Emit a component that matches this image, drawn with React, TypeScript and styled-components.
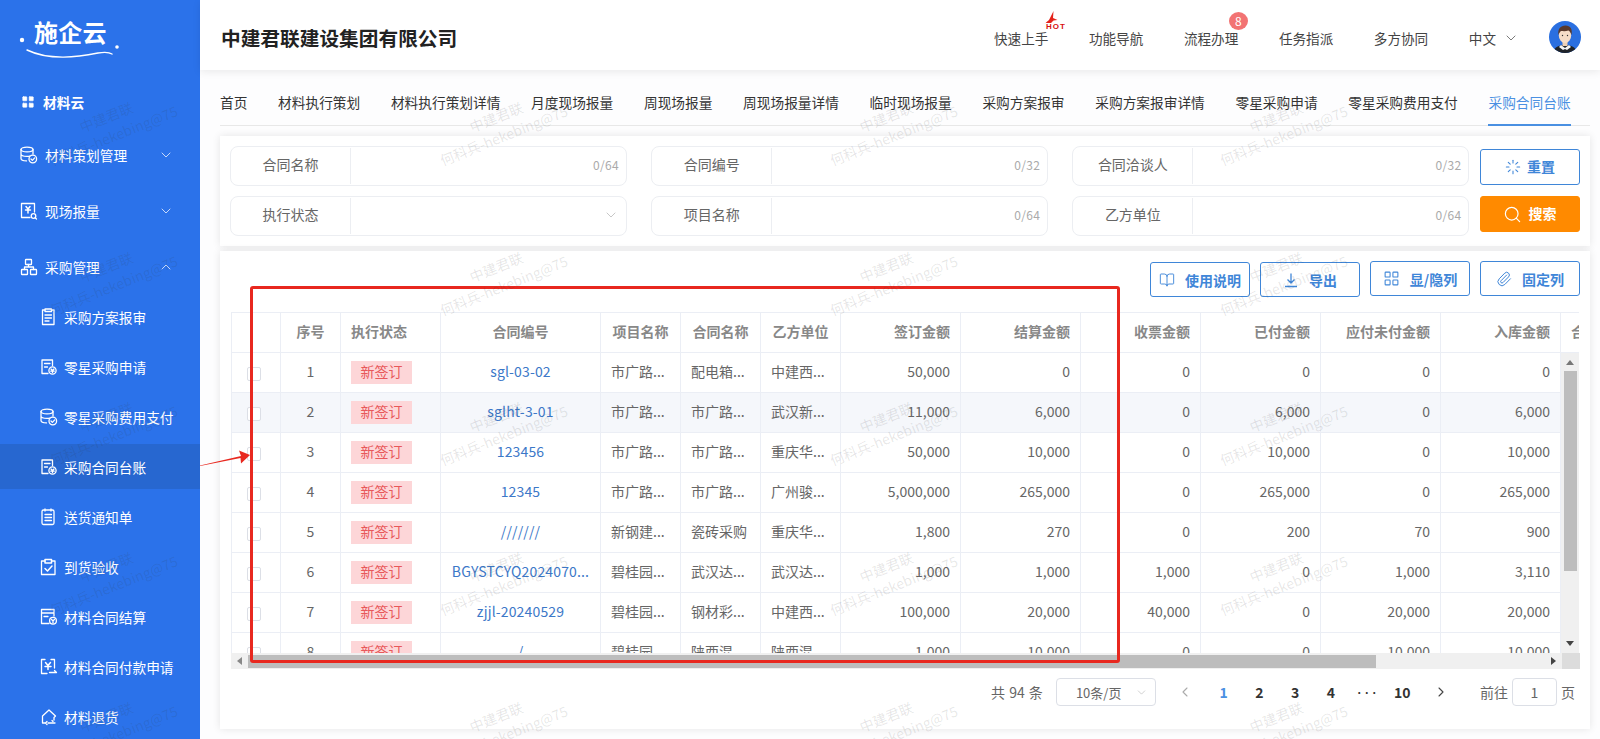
import React from 'react';
import styled, { createGlobalStyle } from 'styled-components';
import { BookOpen, ChevronDown, ChevronLeft, ChevronRight, ChevronUp, LayoutGrid, Loader, Paperclip, Search } from 'lucide-react';

const FONT = '"Noto Sans CJK SC", "Noto Sans", sans-serif';

const GlobalStyle = createGlobalStyle`
    html, body {
        margin: 0;
        height: 100%;
        overflow: hidden;
        background: #fdfdfe;
        font-family: ${FONT};
        font-size: 14px;
    }
    * {
        box-sizing: border-box;
    }
`;

// 侧边栏图标
const Stroke = ({ children, size = 18 }: { children: React.ReactNode; size?: number }) => (
    <svg width={size} height={size} viewBox="0 0 18 18" fill="none" stroke="#fff" strokeWidth="1.3" strokeLinecap="round" strokeLinejoin="round">
        {children}
    </svg>
);

const DbCheck = () => (
    <Stroke>
        <ellipse cx="7" cy="3.5" rx="6" ry="2.4" />
        <path d="M1 3.5v9c0 1.3 2.4 2.4 5.5 2.4M1 8c0 1.3 2.6 2.4 6 2.4 1 0 2-.1 2.8-.3M13 3.5v4.5M1 12.5" />
        <circle cx="12.8" cy="13" r="3.8" />
        <path d="M11 13l1.4 1.4 2.3-2.5" />
    </Stroke>
);

const FileCoin = () => (
    <Stroke>
        <path d="M8 15.5H2V2h10.5v5.5M4.5 5.5h5.5M4.5 9h3" />
        <circle cx="12.5" cy="12.5" r="3.6" />
        <path d="M11 11l1.5 1.5L14 11M10.8 13.2h3.4M12.5 12.5v2" />
    </Stroke>
);

const FrameYen = () => (
    <Stroke>
        <path d="M10 15.5H1.5v-14h13V10" />
        <path d="M6 4.5l2 2.5 2-2.5M5.5 8h5M8 7v4" strokeWidth="1.5" />
        <circle cx="13.5" cy="14" r="2.3" />
        <path d="M15.2 15.7l1.3 1.3" />
    </Stroke>
);

const OrgTree = () => (
    <Stroke>
        <rect x="5.5" y="1.5" width="6" height="5" rx=".6" />
        <rect x="1.5" y="11.5" width="6" height="5" rx=".6" />
        <rect x="10.5" y="11.5" width="6" height="5" rx=".6" />
        <path d="M8.5 6.5V9M4.5 11.5V9h9v2.5" />
    </Stroke>
);

const PaperList = () => (
    <Stroke>
        <rect x="2" y="2" width="12" height="14.5" rx="1.5" />
        <path d="M5 1v2M11 1v2M5 6.5h6.5M5 9.5h6.5M5 12.5h6.5" />
    </Stroke>
);

const ClipList = () => (
    <Stroke>
        <path d="M5 2H2.5v14.5H14V2h-2.5" />
        <path d="M5 1h6.5v2.5H5zM5 7h6.5M5 10h6.5M5 13h4" />
    </Stroke>
);

const ClipCheck = () => (
    <Stroke>
        <path d="M5 3H1.5v13.5H15V3h-3.5" />
        <path d="M5 1.5h6.5V5H5zM5 10.5l2.5 2.5 4.5-5" strokeWidth="1.5" />
    </Stroke>
);

const BillCoin = () => (
    <Stroke>
        <path d="M9 15.5H1.5v-14H14V8M1.5 5H14M4 8.5h4" />
        <circle cx="13" cy="12.8" r="3.4" />
        <path d="M11.6 11.5l1.4 1.4 1.4-1.4M13 13v2" />
    </Stroke>
);

const FrameArrow = () => (
    <Stroke>
        <path d="M5 1.5H1.5v14H7M11 1.5h3.5V10" />
        <path d="M5.5 4.5L8 7.5l2.5-3M5 8.5h6M8 7.5v4" strokeWidth="1.5" />
        <path d="M9.5 14.5h7M14.5 12.5l2 2" />
    </Stroke>
);

const HouseBack = () => (
    <Stroke>
        <path d="M5 15H2.5V8L9 2l6.5 6L14 9.5V12M8 15h7" />
        <path d="M7 13.5L5.500 15 7 16.500M12 12.500l1 1" />
    </Stroke>
);

const Logo = () => (
    <LogoBox>
        <LogoText>施企云</LogoText>
        <LogoMark width="120" height="50" viewBox="0 0 120 50">
            <circle cx="12" cy="25" r="2.2" fill="#fff" />
            <circle cx="107" cy="32" r="1.8" fill="#fff" />
            <path d="M17 35C40 46 68 42 88 38c6-1 11-1 14 1" fill="none" stroke="#fff" strokeWidth="1.4" strokeLinecap="round" />
        </LogoMark>
    </LogoBox>
);

const Avatar = () => (
    <svg width="32" height="32" viewBox="0 0 32 32">
        <clipPath id="av"><circle cx="16" cy="16" r="16" /></clipPath>
        <g clipPath="url(#av)">
            <rect width="32" height="32" fill="#2a6fe0" />
            <path d="M4 32c1-6 6-8 12-8s11 2 12 8z" fill="#1f2329" />
            <path d="M12 24l4 3 4-3 2 2-4 3-2-1-2 1-4-3z" fill="#f5f5f5" />
            <rect x="13.5" y="19" width="5" height="6" fill="#eccfb6" />
            <ellipse cx="16" cy="14.5" rx="6.2" ry="7.6" fill="#f6dcc6" />
            <path d="M9.500 14c-1-6 2-9.500 7-9.500 5 0 7 3.500 6 9.500-.8-2-1.500-4-3-4.500-3 1-6 .5-7.500.5-1.200 1-2 2-2.500 4z" fill="#5a3a2c" />
            <circle cx="13.5" cy="14.5" r=".7" fill="#333" />
            <circle cx="18.5" cy="14.5" r=".7" fill="#333" />
        </g>
    </svg>
);

const HotMark = () => (
    <HotBox width="24" height="18" viewBox="0 0 24 18">
        <path d="M0 12.5l4.5-.5 3.500-3L12.500 0 12 7l4.500 2-4 .5L10 12H5z" fill="#e4231a" />
        <text x="5" y="17.5" fontSize="8" fontWeight="900" fill="#d80f0f" textLength="19" fontFamily="Liberation Sans, sans-serif">HOT</text>
    </HotBox>
);

const TABS = ['首页', '材料执行策划', '材料执行策划详情', '月度现场报量', '周现场报量', '周现场报量详情', '临时现场报量', '采购方案报审', '采购方案报审详情', '零星采购申请', '零星采购费用支付', '采购合同台账'];

const FILTERS = [
    { label: '合同名称', count: '0/64' },
    { label: '合同编号', count: '0/32' },
    { label: '合同洽谈人', count: '0/32' },
    { label: '执行状态', select: true },
    { label: '项目名称', count: '0/64' },
    { label: '乙方单位', count: '0/64' },
];

type Align = 'left' | 'center' | 'right';
const COLUMNS: { title: string; width: number; align: Align; head?: Align }[] = [
    { title: '', width: 49, align: 'left' },
    { title: '序号', width: 60, align: 'center' },
    { title: '执行状态', width: 100, align: 'left' },
    { title: '合同编号', width: 160, align: 'center' },
    { title: '项目名称', width: 80, align: 'left', head: 'center' },
    { title: '合同名称', width: 80, align: 'left', head: 'center' },
    { title: '乙方单位', width: 80, align: 'left', head: 'center' },
    { title: '签订金额', width: 120, align: 'right' },
    { title: '结算金额', width: 120, align: 'right' },
    { title: '收票金额', width: 120, align: 'right' },
    { title: '已付金额', width: 120, align: 'right' },
    { title: '应付未付金额', width: 120, align: 'right' },
    { title: '入库金额', width: 120, align: 'right' },
    { title: '合同付款', width: 120, align: 'left' },
];
const GRID = COLUMNS.map(c => `${c.width}px`).join(' ');

const ROWS = [
    ['sgl-03-02', '市广路...', '配电箱...', '中建西...', '50,000', '0', '0', '0', '0', '0'],
    ['sglht-3-01', '市广路...', '市广路...', '武汉新...', '11,000', '6,000', '0', '6,000', '0', '6,000'],
    ['123456', '市广路...', '市广路...', '重庆华...', '50,000', '10,000', '0', '10,000', '0', '10,000'],
    ['12345', '市广路...', '市广路...', '广州骏...', '5,000,000', '265,000', '0', '265,000', '0', '265,000'],
    ['///////', '新钢建...', '瓷砖采购', '重庆华...', '1,800', '270', '0', '200', '70', '900'],
    ['BGYSTCYQ2024070...', '碧桂园...', '武汉达...', '武汉达...', '1,000', '1,000', '1,000', '0', '1,000', '3,110'],
    ['zjjl-20240529', '碧桂园...', '钢材彩...', '中建西...', '100,000', '20,000', '40,000', '0', '20,000', '20,000'],
    ['/', '碧桂园...', '陕西混...', '陕西混...', '1,000', '10,000', '0', '0', '10,000', '10,000'],
];

const App = () => {
    return (
        <Page>
            <GlobalStyle />
            <Sidebar>
                <Logo />
                <CloudRow><LayoutGrid size={14} fill="#fff" strokeWidth={1} />材料云</CloudRow>
                <TopRow><DbCheck /><span>材料策划管理</span><ChevronDown size={16} strokeWidth={1.3} /></TopRow>
                <TopRow><FrameYen /><span>现场报量</span><ChevronDown size={16} strokeWidth={1.3} /></TopRow>
                <TopRow><OrgTree /><span>采购管理</span><ChevronUp size={16} strokeWidth={1.3} /></TopRow>
                <SubList>
                    <SubRow><ClipList />采购方案报审</SubRow>
                    <SubRow><FileCoin />零星采购申请</SubRow>
                    <SubRow><DbCheck />零星采购费用支付</SubRow>
                    <SubRow $active><FileCoin />采购合同台账</SubRow>
                    <SubRow><PaperList />送货通知单</SubRow>
                    <SubRow><ClipCheck />到货验收</SubRow>
                    <SubRow><BillCoin />材料合同结算</SubRow>
                    <SubRow><FrameArrow />材料合同付款申请</SubRow>
                    <SubRow><HouseBack />材料退货</SubRow>
                </SubList>
            </Sidebar>

            <Main>
                <Header>
                    <Title>中建君联建设集团有限公司</Title>
                    <HeaderNav>
                        <NavItem>快速上手<HotMark /></NavItem>
                        <NavItem>功能导航</NavItem>
                        <NavItem>流程办理<Badge>8</Badge></NavItem>
                        <NavItem>任务指派</NavItem>
                        <NavItem>多方协同</NavItem>
                        <Lang>中文<ChevronDown size={16} strokeWidth={1.3} color="#666" /></Lang>
                    </HeaderNav>
                    <AvatarWrap><Avatar /></AvatarWrap>
                </Header>

                <Content>
                    <Tabs>
                        {TABS.map((t, i) => <Tab key={t} $active={i === TABS.length - 1}>{t}</Tab>)}
                    </Tabs>

                    <FilterCard>
                        <FieldGrid>
                            {FILTERS.map(f => (
                                <Field key={f.label}>
                                    <FieldLabel>{f.label}</FieldLabel>
                                    <FieldValue>
                                        {f.select ? <ChevronDown size={16} strokeWidth={1} color="#aaa" /> : f.count}
                                    </FieldValue>
                                </Field>
                            ))}
                        </FieldGrid>
                        <ButtonCol>
                            <OutlineButton><Loader size={16} strokeWidth={1.6} />重置</OutlineButton>
                            <SearchButton><Search size={19} strokeWidth={1.5} />搜索</SearchButton>
                        </ButtonCol>
                    </FilterCard>

                    <TableCard>
                        <Toolbar>
                            <ToolButton $low><BookOpen size={16} strokeWidth={1.4} />使用说明</ToolButton>
                            <ToolButton $low>
                                <svg width="16" height="16" viewBox="0 0 16 16" fill="none" stroke="currentColor" strokeWidth="1.3"><path d="M8 1.5v9M4.5 7.5L8 11l3.500-3.500M2 14.500h12" /></svg>
                                导出
                            </ToolButton>
                            <ToolButton><LayoutGrid size={17} strokeWidth={1.5} />显/隐列</ToolButton>
                            <ToolButton><Paperclip size={16} strokeWidth={1.5} />固定列</ToolButton>
                        </Toolbar>

                        <TableWrap>
                            <HeadClip>
                                <HeadRow>
                                    {COLUMNS.map((c, i) => <HeadCell key={i} $align={c.head || c.align}>{c.title}</HeadCell>)}
                                </HeadRow>
                            </HeadClip>
                            <BodyWrap>
                                <BodyClip>
                                    {ROWS.map((r, i) => (
                                        <BodyRow key={i} $hl={i === 1}>
                                            <CheckCell><Check /></CheckCell>
                                            <BodyCell $align="center">{i + 1}</BodyCell>
                                            <BodyCell $align="left"><Tag>新签订</Tag></BodyCell>
                                            <BodyCell $align="center"><ContractLink>{r[0]}</ContractLink></BodyCell>
                                            {r.slice(1).map((v, j) => (
                                                <BodyCell key={j} $align={j < 3 ? 'left' : 'right'}>{v}</BodyCell>
                                            ))}
                                        </BodyRow>
                                    ))}
                                </BodyClip>
                                <VBar>
                                    <ArrowUp />
                                    <VThumb />
                                    <VSpace />
                                    <ArrowDown />
                                </VBar>
                            </BodyWrap>
                            <HBar>
                                <HArrow><ArrowLeft /></HArrow>
                                <HThumb />
                                <VSpace />
                                <HArrow><ArrowRight /></HArrow>
                                <Corner />
                            </HBar>
                        </TableWrap>

                        <Pagination>
                            <Total>共 94 条</Total>
                            <SizeSelect>10条/页<ChevronDown size={13} strokeWidth={1} color="#aaa" /></SizeSelect>
                            <PageArrow $dim><ChevronLeft size={16} strokeWidth={1.6} /></PageArrow>
                            <PageNum $active>1</PageNum>
                            <PageNum>2</PageNum>
                            <PageNum>3</PageNum>
                            <PageNum>4</PageNum>
                            <PageMore>•••</PageMore>
                            <PageNum>10</PageNum>
                            <PageArrow><ChevronRight size={16} strokeWidth={1.6} /></PageArrow>
                            <Jump>前往</Jump>
                            <JumpInput>1</JumpInput>
                            <Jump>页</Jump>
                        </Pagination>
                    </TableCard>
                </Content>
            </Main>

            <Annotation />
            <AnnotationArrow width="56" height="22" viewBox="0 0 56 22">
                <path d="M1 18.5L42 9 40 3.5 51 8l-9 8.5-.5-5.5L1 19z" fill="#e8281f" />
            </AnnotationArrow>

            <Watermarks>
                {Array.from({ length: 30 }).map((_, i) => (
                    <MarkCell key={i}>
                        <MarkText>
                            <div>中建君联</div>
                            <div>何科兵-hekebing@75</div>
                        </MarkText>
                    </MarkCell>
                ))}
            </Watermarks>
        </Page>
    );
};

export default App;

const Page = styled.div`
    display: flex;
    width: 1600px;
    height: 739px;
    overflow: hidden;
    position: relative;
`;

const Sidebar = styled.aside`
    width: 200px;
    flex-shrink: 0;
    height: 739px;
    overflow: hidden;
    background: #2b72ea;
    color: #fff;
    font-size: 13.7px;
`;

const LogoBox = styled.div`
    position: relative;
    height: 80px;
    padding: 15px 0 0 34px;
`;

const LogoText = styled.div`
    font-size: 24px;
    line-height: 34px;
    font-weight: 700;
    letter-spacing: 0.3px;
`;

const LogoMark = styled.svg`
    position: absolute;
    left: 10px;
    top: 15px;
`;

const CloudRow = styled.div`
    display: flex;
    align-items: center;
    gap: 8px;
    height: 47px;
    padding: 0 0 4px 21px;
    font-weight: 700;
`;

const TopRow = styled.div`
    display: flex;
    align-items: center;
    height: 56px;
    padding: 0 26px 1px 20px;
    span {
        flex: 1;
        margin-left: 7px;
    }
    svg:last-child {
        opacity: 0.85;
    }
`;

const SubList = styled.div`
    display: flex;
    flex-direction: column;
    gap: 5px;
    margin-top: -1px;
`;

const SubRow = styled.div<{ $active?: boolean }>`
    display: flex;
    align-items: center;
    gap: 6px;
    height: 45px;
    flex-shrink: 0;
    padding: 1px 0 0 40px;
    background: ${props => (props.$active ? '#2767d0' : 'transparent')};
`;

const Main = styled.main`
    flex: 1;
    min-width: 0;
    display: flex;
    flex-direction: column;
`;

const Header = styled.header`
    display: flex;
    align-items: center;
    height: 70px;
    padding: 8px 19px 0 21px;
    background: #fff;
    box-shadow: 0 2px 8px rgba(0, 0, 0, 0.08);
    position: relative;
`;

const Title = styled.div`
    flex: 1;
    padding-bottom: 3px;
    font-size: 19.7px;
    font-weight: 700;
    color: #222;
`;

const HeaderNav = styled.nav`
    display: flex;
    align-items: center;
    gap: 40.6px;
    padding-bottom: 2px;
    color: #444;
`;

const NavItem = styled.div`
    position: relative;
    font-size: 13.6px;
`;

const HotBox = styled.svg`
    position: absolute;
    left: 47px;
    top: -17px;
`;

const Badge = styled.span`
    position: absolute;
    left: 45px;
    top: -16px;
    width: 19px;
    height: 18px;
    border-radius: 50%;
    background: #f27373;
    color: #fff;
    font-size: 12px;
    line-height: 18px;
    text-align: center;
`;

const Lang = styled.div`
    display: flex;
    align-items: center;
    gap: 7px;
    font-size: 13.6px;
`;

const AvatarWrap = styled.div`
    width: 32px;
    height: 32px;
    margin: -4px 0 0 30px;
`;

const Content = styled.div`
    flex: 1;
    padding: 0 10px 0 20px;
    display: flex;
    flex-direction: column;
`;

const Tabs = styled.div`
    display: flex;
    gap: 30.7px;
    height: 56px;
    border-bottom: 1px solid #e8e8e8;
    color: #333;
    font-size: 13.7px;
`;

const Tab = styled.div<{ $active?: boolean }>`
    height: 56px;
    line-height: 64px;
    white-space: nowrap;
    color: ${props => (props.$active ? '#4a90e2' : '#333')};
    border-bottom: 2px solid ${props => (props.$active ? '#4a90e2' : 'transparent')};
`;

const FilterCard = styled.section`
    display: flex;
    height: 110px;
    margin-top: 10px;
    padding: 10px;
    background: #fff;
    box-shadow: 0 0 8px rgba(0, 0, 0, 0.1);
`;

const FieldGrid = styled.div`
    display: grid;
    grid-template-columns: repeat(3, 397px);
    grid-auto-rows: 40px;
    column-gap: 24.2px;
    row-gap: 10px;
`;

const Field = styled.div`
    display: flex;
    align-items: center;
    border: 1px solid #eceef2;
    border-radius: 8px;
`;

const FieldLabel = styled.div`
    width: 120px;
    height: 36px;
    line-height: 32px;
    text-align: center;
    color: #666;
    border-right: 1px solid #eceef2;
`;

const FieldValue = styled.div`
    flex: 1;
    display: flex;
    align-items: center;
    justify-content: flex-end;
    padding: 0 7px 3px 0;
    color: #aaa;
    font-size: 12px;
    letter-spacing: 0.3px;
`;

const ButtonCol = styled.div`
    display: flex;
    flex-direction: column;
    gap: 11px;
    margin: 3px 0 0 10.6px;
    width: 100px;
`;

const OutlineButton = styled.div`
    display: flex;
    align-items: center;
    justify-content: center;
    gap: 6px;
    height: 36px;
    padding-bottom: 3px;
    border: 1px solid #3f86d8;
    border-radius: 3px;
    color: #3f86d8;
    font-weight: 700;
    svg {
        margin-top: 3px;
    }
`;

const SearchButton = styled(OutlineButton)`
    border-color: #ff8a00;
    background: #ff8a00;
    color: #fff;
`;

const TableCard = styled.section`
    height: 478px;
    margin-top: 5px;
    padding: 10px 10px 0 11px;
    background: #fff;
    box-shadow: 0 0 8px rgba(0, 0, 0, 0.1);
`;

const Toolbar = styled.div`
    display: flex;
    justify-content: flex-end;
    align-items: flex-start;
    gap: 10px;
    height: 51px;
`;

const ToolButton = styled.div<{ $low?: boolean }>`
    display: flex;
    align-items: center;
    justify-content: center;
    gap: 10px;
    width: 100px;
    height: 35px;
    margin-top: ${props => (props.$low ? '1px' : '0')};
    border: 1px solid #3f86d8;
    border-radius: 3px;
    color: #3f86d8;
    font-weight: 700;
`;

const TableWrap = styled.div`
    width: 1349px;
    height: 357px;
    display: flex;
    flex-direction: column;
    color: #666;
`;

const HeadClip = styled.div`
    width: 1348px;
    height: 41px;
    overflow: hidden;
    border-top: 1px solid #ebeef5;
    flex-shrink: 0;
`;

const HeadRow = styled.div`
    display: grid;
    grid-template-columns: ${GRID};
    height: 40px;
    border-left: 1px solid #ebeef5;
    border-bottom: 1px solid #ebeef5;
    width: max-content;
`;

const HeadCell = styled.div<{ $align: Align }>`
    display: flex;
    align-items: center;
    justify-content: ${props => (props.$align === 'left' ? 'flex-start' : props.$align === 'right' ? 'flex-end' : 'center')};
    padding: 0 10px 3px 10px;
    border-right: 1px solid #ebeef5;
    font-weight: 700;
    color: #888;
    white-space: nowrap;
`;

const BodyWrap = styled.div`
    display: flex;
    height: 300px;
    flex-shrink: 0;
    width: 1348px;
`;

const BodyClip = styled.div`
    width: 1330px;
    overflow: hidden;
`;

const BodyRow = styled.div<{ $hl?: boolean }>`
    display: grid;
    grid-template-columns: ${GRID};
    height: 40px;
    width: max-content;
    border-left: 1px solid #ebeef5;
    border-bottom: 1px solid #ebeef5;
    background: ${props => (props.$hl ? '#f5f7fb' : '#fff')};
`;

const BodyCell = styled.div<{ $align: Align }>`
    display: flex;
    align-items: center;
    justify-content: ${props => (props.$align === 'left' ? 'flex-start' : props.$align === 'right' ? 'flex-end' : 'center')};
    padding: 0 10px 3px 10px;
    border-right: 1px solid #ebeef5;
    white-space: nowrap;
    overflow: hidden;
`;

const CheckCell = styled.div`
    display: flex;
    align-items: center;
    padding: 3px 0 0 15px;
    border-right: 1px solid #ebeef5;
`;

const Check = styled.div`
    width: 14px;
    height: 14px;
    background: #fff;
    border: 1px solid #dcdfe6;
    border-radius: 2px;
`;

const Tag = styled.span`
    width: 61px;
    height: 23px;
    margin-top: 3px;
    line-height: 21px;
    text-align: center;
    background: #fdd6d8;
    color: #e8585a;
`;

const ContractLink = styled.span`
    color: #3c78c8;
    letter-spacing: 0.15px;
`;

const VBar = styled.div`
    width: 18px;
    display: flex;
    flex-direction: column;
    align-items: center;
    background: #f0f0f0;
`;

const VThumb = styled.div`
    width: 13px;
    height: 200px;
    background: #bdbdbd;
    flex-shrink: 0;
`;

const VSpace = styled.div`
    flex: 1;
`;

const ArrowUp = styled.div`
    width: 0;
    height: 0;
    margin: 7px 0 6px;
    border: 4px solid transparent;
    border-top: 0;
    border-bottom: 5px solid #777;
`;

const ArrowDown = styled(ArrowUp)`
    margin: 6px 0 7px;
    border-bottom: 0;
    border-top: 5px solid #444;
`;

const HBar = styled.div`
    display: flex;
    align-items: center;
    height: 16px;
    background: #f0f0f0;
`;

const HArrow = styled.div`
    width: 17px;
    height: 16px;
    flex-shrink: 0;
    display: flex;
    align-items: center;
    justify-content: center;
`;

const ArrowLeft = styled.div`
    width: 0;
    height: 0;
    border: 4px solid transparent;
    border-left: 0;
    border-right: 5px solid #888;
`;

const ArrowRight = styled.div`
    width: 0;
    height: 0;
    border: 4px solid transparent;
    border-right: 0;
    border-left: 5px solid #444;
`;

const HThumb = styled.div`
    width: 1128px;
    height: 13px;
    background: #bdbdbd;
    flex-shrink: 0;
`;

const Corner = styled.div`
    width: 18px;
    height: 16px;
    flex-shrink: 0;
    background: #dcdcdc;
`;

const Pagination = styled.div`
    display: flex;
    align-items: center;
    justify-content: flex-end;
    height: 46px;
    padding: 0 5px 0 0;
    color: #666;
`;

const Total = styled.div`
    margin-right: 13px;
    word-spacing: 1px;
`;

const SizeSelect = styled.div`
    display: flex;
    align-items: center;
    justify-content: space-between;
    width: 100px;
    height: 28px;
    padding: 0 7px 0 19px;
    border: 1px solid #dcdfe6;
    border-radius: 4px;
    margin-right: 11px;
    font-size: 13px;
`;

const PageArrow = styled.div<{ $dim?: boolean }>`
    display: flex;
    align-items: center;
    justify-content: center;
    width: 36px;
    margin: ${props => (props.$dim ? '0 3px 0 0' : '0 21px 0 3px')};
    color: ${props => (props.$dim ? '#aaa' : '#444')};
`;

const PageNum = styled.div<{ $active?: boolean }>`
    width: 35.7px;
    text-align: center;
    font-weight: 700;
    white-space: nowrap;
    color: ${props => (props.$active ? '#4a90e2' : '#333')};
`;

const PageMore = styled(PageNum)`
    font-size: 8px;
    letter-spacing: -0.5px;
`;

const Jump = styled.div`
    white-space: nowrap;
`;

const JumpInput = styled.div`
    width: 45px;
    height: 28px;
    line-height: 26px;
    margin: 0 4px;
    text-align: center;
    border: 1px solid #dcdfe6;
    border-radius: 4px;
`;

// 标注框和箭头压在表格上面
const Annotation = styled.div`
    position: absolute;
    left: 250px;
    top: 286px;
    width: 870px;
    height: 377px;
    border: 3px solid #e8281f;
    border-radius: 3px;
    pointer-events: none;
`;

const AnnotationArrow = styled.svg`
    position: absolute;
    left: 199px;
    top: 447px;
`;

const Watermarks = styled.div`
    position: absolute;
    left: -85px;
    top: 51px;
    display: grid;
    grid-template-columns: repeat(5, 390px);
    grid-auto-rows: 150px;
    pointer-events: none;
`;

const MarkCell = styled.div`
    display: flex;
    align-items: center;
    justify-content: center;
`;

const MarkText = styled.div`
    transform: rotate(-22deg);
    text-align: center;
    font-size: 14px;
    line-height: 19.5px;
    white-space: nowrap;
    color: rgba(50, 50, 50, 0.12);
`;
